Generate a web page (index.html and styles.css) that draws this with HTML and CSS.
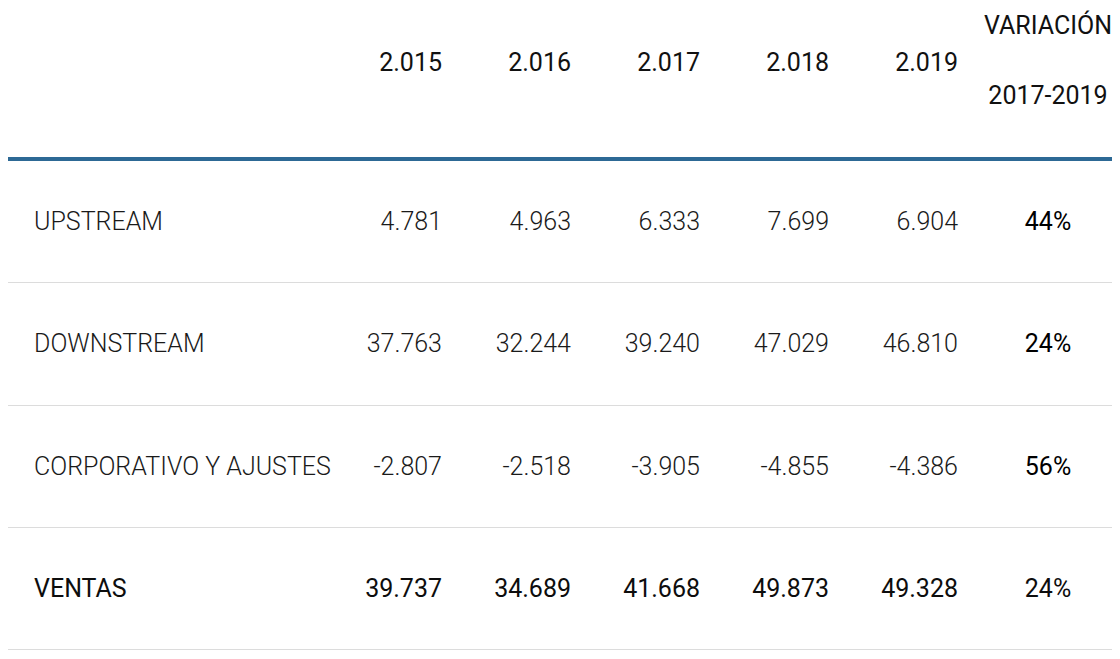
FILE: index.html
```html
<!DOCTYPE html>
<html lang="es">
<head>
<meta charset="utf-8">
<title>Ventas</title>
<link rel="stylesheet" href="styles.css">
</head>
<body>
<table class="sales">
  <colgroup>
    <col class="c-label">
    <col class="c-num"><col class="c-num"><col class="c-num"><col class="c-num"><col class="c-num">
    <col class="c-var">
  </colgroup>
  <thead>
    <tr>
      <th class="label"></th>
      <th class="num">2.015</th>
      <th class="num">2.016</th>
      <th class="num">2.017</th>
      <th class="num">2.018</th>
      <th class="num">2.019</th>
      <th class="var"><span class="var-line">VARIACIÓN</span><span class="var-line var-gap">2017-2019</span></th>
    </tr>
  </thead>
  <tbody>
    <tr>
      <td class="label">UPSTREAM</td>
      <td class="num">4.781</td>
      <td class="num">4.963</td>
      <td class="num">6.333</td>
      <td class="num">7.699</td>
      <td class="num">6.904</td>
      <td class="var strong">44%</td>
    </tr>
    <tr class="tall">
      <td class="label">DOWNSTREAM</td>
      <td class="num">37.763</td>
      <td class="num">32.244</td>
      <td class="num">39.240</td>
      <td class="num">47.029</td>
      <td class="num">46.810</td>
      <td class="var strong">24%</td>
    </tr>
    <tr>
      <td class="label">CORPORATIVO Y AJUSTES</td>
      <td class="num">-2.807</td>
      <td class="num">-2.518</td>
      <td class="num">-3.905</td>
      <td class="num">-4.855</td>
      <td class="num">-4.386</td>
      <td class="var strong">56%</td>
    </tr>
    <tr class="total">
      <td class="label">VENTAS</td>
      <td class="num">39.737</td>
      <td class="num">34.689</td>
      <td class="num">41.668</td>
      <td class="num">49.873</td>
      <td class="num">49.328</td>
      <td class="var">24%</td>
    </tr>
  </tbody>
</table>
</body>
</html>
```

FILE: styles.css
```css
html, body {
  background: #ffffff;
}
body {
  margin: 0 8px 8px;
  font-family: Roboto, "Liberation Sans", sans-serif;
  color: #111;
}
.sales {
  width: 1106px;
  table-layout: fixed;
  border-collapse: collapse;
  border-spacing: 0;
  font-size: 25px;
  line-height: 28px;
}
.c-label { width: 329px; }
.c-num { width: 129px; }
.c-var { width: 132px; }

.sales th {
  font-weight: 400;
  color: #111;
  vertical-align: middle;
  padding: 12px 0 47px;
  border-bottom: 4px solid #2d6995;
}
.sales th.num {
  padding-top: 16px;
}
.sales td {
  height: 121px;
  padding: 0;
  vertical-align: middle;
  border-bottom: 1px solid #dcdcdc;
  font-weight: 300;
  color: #1a1a1a;
}
.sales tr.tall td {
  height: 122px;
}
.label {
  text-align: left;
  padding-left: 26px !important;
}
.num {
  text-align: right;
  padding-right: 24px !important;
}
.var {
  text-align: center;
}
.sales th.var {
  padding-left: 0;
  padding-right: 0;
}
.var-line {
  display: block;
  text-align: center;
  white-space: nowrap;
}
.var-gap {
  margin-top: 42px;
}
.sales td.strong {
  font-weight: 400;
  color: #000;
}
.total td {
  font-weight: 400;
  color: #0d0d0d;
}
```
